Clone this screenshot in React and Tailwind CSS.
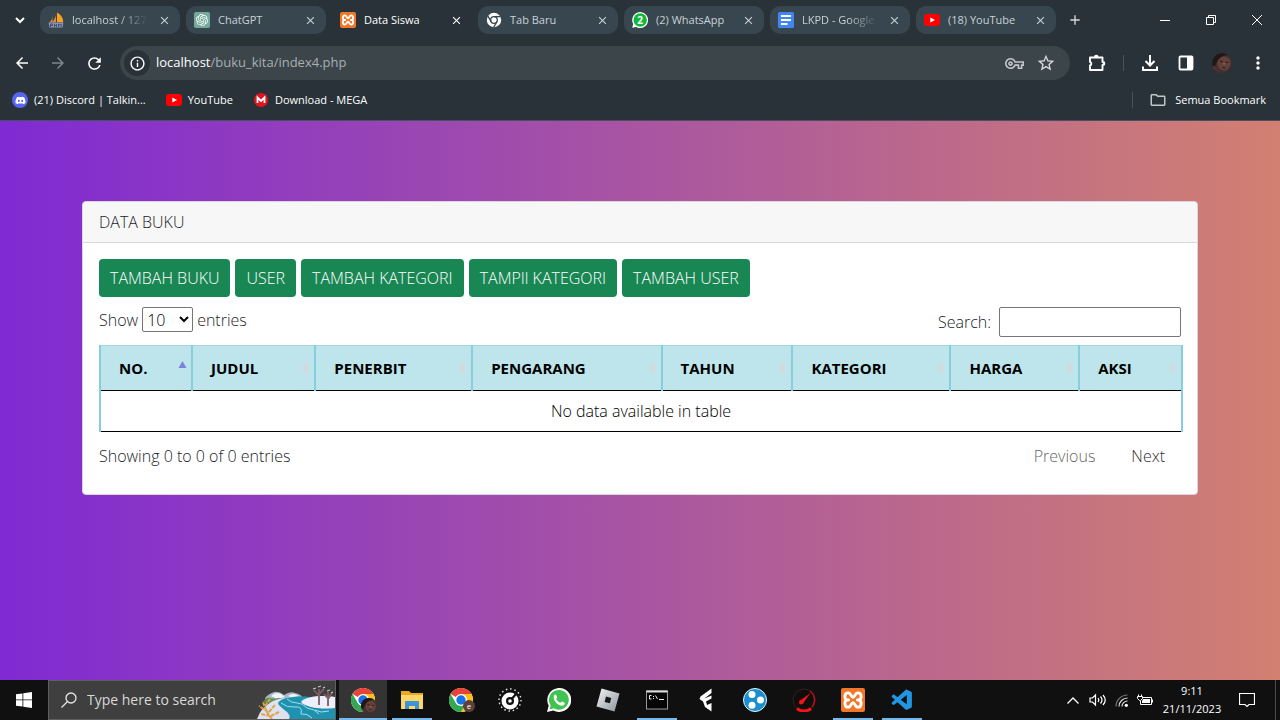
import React from "react";
import { SiOpenai } from "react-icons/si";
import { FaDiscord } from "react-icons/fa";
import { VscVscode } from "react-icons/vsc";
import {
  MdArrowBack,
  MdArrowForward,
  MdRefresh,
  MdInfoOutline,
  MdOutlineVpnKey,
  MdStarBorder,
  MdMoreVert,
  MdOutlineFolder,
  MdClose,
  MdAdd,
} from "react-icons/md";

function SailIcon() {
  return (
    <svg viewBox="0 0 16 16" className="size-4 shrink-0" aria-hidden="true">
      <path d="M8 0.500C8.500 4 6.500 8 3.500 10.500L8 10.200Z" fill="#e08e34" />
      <path d="M4.500 2C4.800 6 3.500 8.500 1.200 10.500L4.500 10.200Z" fill="#c08a50" />
      <path d="M9 0.500C13.500 3 15.500 7 15 10.300L9 10.300Z" fill="#f8a020" />
      <path d="M0.500 10.500h15l-1 5H1.500z" fill="#8d93b4" />
      <path d="M2.500 15v-3h2v1.500h-2M6.500 12v3m0-1.500h2m0-1.500v3M10.500 15v-3l1.300 1 1.300-1v3" stroke="#39405a" fill="none" strokeWidth="0.800" />
    </svg>
  );
}

function GptIcon() {
  return (
    <span className="flex size-4 shrink-0 items-center justify-center rounded-xs bg-[#74aa9c] text-white">
      <SiOpenai size={12} />
    </span>
  );
}

function XamppGlyph({ className }) {
  return (
    <svg viewBox="0 0 20 20" className={className} fill="none" stroke="currentColor" strokeWidth="2.600" strokeLinecap="round" strokeLinejoin="round" aria-hidden="true">
      <path d="M5.500 3.500C2 3.500 2 8.500 4 10C2 11.500 2 16.500 5.500 16.500C8.500 16.500 8 12.500 10 12.500S11.500 16.500 14.500 16.500C18 16.500 18 11.500 16 10C18 8.500 18 3.500 14.500 3.500C11.500 3.500 12 7.500 10 7.500S8.500 3.500 5.500 3.500z" />
      <path d="M4 10h2M14 10h2" />
    </svg>
  );
}

function XamppIcon({ large }) {
  return large ? (
    <span className="flex size-6 items-center justify-center rounded-xs bg-[#f07828] text-white">
      <XamppGlyph className="size-[22px]" />
    </span>
  ) : (
    <span className="flex size-4 shrink-0 items-center justify-center rounded-xs bg-[#f07828] text-white">
      <XamppGlyph className="size-3.5" />
    </span>
  );
}

function ChromeMonoIcon() {
  return (
    <svg viewBox="0 0 16 16" className="size-4 shrink-0" aria-hidden="true">
      <circle cx="8" cy="8" r="7.200" fill="#fff" />
      <circle cx="8" cy="8" r="3.300" fill="none" stroke="#38474f" strokeWidth="1.300" />
      <path d="M8 4.700H14.500M5.100 9.600L1.900 4.200M10.900 9.600L7.700 15.200" stroke="#38474f" strokeWidth="1.300" />
    </svg>
  );
}

function WhatsappBadgeIcon() {
  return (
    <span className="relative flex size-4 shrink-0 items-center justify-center">
      <svg viewBox="0 0 16 16" className="absolute inset-0 size-4" aria-hidden="true">
        <path d="M0.200 15.800L1.200 12A8 8 0 1 1 4.200 15Z" fill="#fff" />
        <circle cx="8.200" cy="8" r="6.700" fill="#12b83e" />
      </svg>
      <span className="relative text-[10px] leading-none font-bold text-white">2</span>
    </span>
  );
}

function DocsIcon() {
  return (
    <svg viewBox="0 0 16 16" className="size-4 shrink-0" aria-hidden="true">
      <rect width="16" height="16" rx="1.500" fill="#4285f4" />
      <path d="M3 4h10M3 8h10M3 12h6.500" stroke="#fff" strokeWidth="2" />
    </svg>
  );
}

function YoutubeIcon() {
  return (
    <svg viewBox="0 0 16 16" className="size-4 shrink-0" aria-hidden="true">
      <rect y="2" width="16" height="12" rx="3" fill="#f00" />
      <path d="M6.300 5.400L11 8l-4.700 2.600z" fill="#fff" />
    </svg>
  );
}

function MegaIcon() {
  return (
    <svg viewBox="0 0 16 16" className="size-4 shrink-0" aria-hidden="true">
      <circle cx="8" cy="8" r="7" fill="#e0151f" />
      <path d="M4.500 11V5.500L8 9l3.500-3.500V11" stroke="#fff" strokeWidth="1.800" fill="none" />
    </svg>
  );
}

function DiscordIcon() {
  return (
    <span className="flex size-4 shrink-0 items-center justify-center rounded-full bg-[#5865f2] text-white">
      <FaDiscord size={11} />
    </span>
  );
}

function Portrait({ className }) {
  return (
    <svg viewBox="0 0 20 20" className={className} aria-hidden="true">
      <defs>
        <clipPath id="face">
          <circle cx="10" cy="10" r="10" />
        </clipPath>
      </defs>
      <g clipPath="url(#face)">
        <rect width="20" height="20" fill="#45302e" />
        <ellipse cx="12" cy="10.500" rx="6.500" ry="7" fill="#64413b" />
        <path d="M0 0h20v3C14 1 9 3 6 7L3 13H0z" fill="#201818" />
        <path d="M8 8l3 1M13.500 9.500l3-.5M10 14.500l3.500.5" stroke="#2e1d1b" strokeWidth="1.200" />
        <path d="M11 10.500l2 .5" stroke="#8a6258" strokeWidth="1.500" />
        <path d="M1 13l6 7H0z" fill="#6b2f2f" />
      </g>
    </svg>
  );
}

function ChromeIcon({ badge }) {
  return (
    <span className="relative size-6">
      <svg viewBox="0 0 24 24" className="size-6" aria-hidden="true">
        <circle cx="12" cy="12" r="12" fill="#fff" />
        <path d="M12 12L1.600 6A12 12 0 0 1 22.400 6H12z" fill="#ea4335" />
        <path d="M12 6H22.400A12 12 0 0 1 12 24L17.200 15z" fill="#fbc116" />
        <path d="M1.600 6A12 12 0 0 0 12 24L17.200 15L12 17.400L6.800 15z" fill="#34a853" />
        <circle cx="12" cy="12" r="6" fill="#fff" />
        <circle cx="12" cy="12" r="4.700" fill="#1a73e8" />
      </svg>
      {badge === "photo" ? (
        <Portrait className="absolute -right-0.5 -bottom-0.5 size-4" />
      ) : (
        <span className="absolute -right-0.5 bottom-0 flex size-3 items-center justify-center rounded-full bg-[#5d4037] text-[8px] leading-none text-white">
          e
        </span>
      )}
    </span>
  );
}

function FolderIcon() {
  return (
    <svg viewBox="0 0 24 24" className="size-6" aria-hidden="true">
      <path d="M1 3h8l2 2h12v16H1z" fill="#e8a824" />
      <path d="M1 7h22v14H1z" fill="#ffd766" />
      <path d="M5 21v-7q0-1 1-1h12q1 0 1 1v7h-4v-3H9v3z" fill="#3c95d6" />
    </svg>
  );
}

function DialIcon() {
  return (
    <svg viewBox="0 0 24 24" className="size-6" aria-hidden="true">
      <circle cx="12" cy="12" r="11" fill="none" stroke="#ddd" strokeWidth="1.500" strokeDasharray="1.500 2.800" />
      <circle cx="12" cy="13" r="8.500" fill="#fff" />
      <circle cx="12" cy="13" r="4" fill="#111" />
      <path d="M12 13L18 6" stroke="#111" strokeWidth="2.200" />
      <circle cx="12" cy="13" r="1.800" fill="#fff" />
    </svg>
  );
}

function WhatsappIcon() {
  return (
    <svg viewBox="0 0 24 24" className="size-6" aria-hidden="true">
      <path d="M0 24L1.700 17.700A12 12 0 1 1 6.300 22.400Z" fill="#fff" />
      <path d="M2.600 21.400L3.700 17.400A9.900 9.900 0 1 1 6.800 20.300Z" fill="#3fc351" />
      <path d="M7 7.500c.8-1.500 2-1 2.300-.2l.8 2c.2.600-.9 1.300-.9 1.700 1 2 2.300 3 4.300 3.800.5.100 1.200-1.400 1.800-1.200l2.200 1.100c.8.400-.1 2.500-1.400 2.900-2 .6-5-.8-7-2.900S6.300 10 7 7.500z" fill="#fff" />
    </svg>
  );
}

function RobloxIcon() {
  return (
    <svg viewBox="0 0 24 24" className="size-6" aria-hidden="true">
      <defs>
        <linearGradient id="steel" x1="0" y1="0" x2="1" y2="1">
          <stop offset="0" stopColor="#f4f5f6" />
          <stop offset="1" stopColor="#8b949c" />
        </linearGradient>
      </defs>
      <path d="M5.500 0.500L23.500 5.500L18.500 23.500L0.500 18.500Z" fill="url(#steel)" />
      <path d="M10 8.500L15.300 10L13.900 15.300L8.600 13.900Z" fill="#14181c" />
    </svg>
  );
}

function TerminalIcon() {
  return (
    <svg viewBox="0 0 24 24" className="size-6" aria-hidden="true">
      <rect x="1.500" y="3" width="21" height="18" fill="#050505" stroke="#9a9a9a" />
      <path d="M1.500 3.500h21" stroke="#dcdcdc" strokeWidth="2" />
      <path d="M6.500 7.500H4.500v3.500H6.500M8.500 8v1M8.500 10v1M10.500 7.500l2 3.500M14 11.500h5" stroke="#eee" fill="none" />
    </svg>
  );
}

function FilmoraIcon() {
  return (
    <svg viewBox="0 0 24 24" className="size-6" aria-hidden="true">
      <path d="M17.500 0.500L6.500 8.500L5.500 11L9 13.500L11 19L17.500 23.500V15L13 17L12 13.500L17.500 10.500V7.500L10.500 10.500L17.500 5z" fill="#fff" />
    </svg>
  );
}

function DotsIcon() {
  return (
    <svg viewBox="0 0 24 24" className="size-6" aria-hidden="true">
      <circle cx="12" cy="12" r="11.500" fill="#188fd0" stroke="#e6f4fb" />
      <circle cx="9" cy="6.500" r="3.500" fill="#fff" />
      <circle cx="17.500" cy="12" r="3.500" fill="#fff" />
      <circle cx="9" cy="17.200" r="3.500" fill="#fff" />
    </svg>
  );
}

function GaugeIcon() {
  return (
    <svg viewBox="0 0 24 24" className="size-6" aria-hidden="true">
      <circle cx="12" cy="12" r="11" fill="#120d0d" stroke="#35201f" />
      <path d="M18 3A11 11 0 0 1 20 19" fill="none" stroke="#c01218" strokeWidth="1.500" />
      <path d="M5 20.500a11 11 0 0 0 14 0" fill="none" stroke="#f3141a" strokeWidth="3" />
      <path d="M18.500 5L7.500 13L10.500 16z" fill="#f3141a" />
      <circle cx="9.200" cy="14.300" r="2.200" fill="#f3141a" />
    </svg>
  );
}

const tabs = [
  { title: "localhost / 127", icon: <SailIcon />, fades: true },
  { title: "ChatGPT", icon: <GptIcon /> },
  { title: "Data Siswa", icon: <XamppIcon />, active: true },
  { title: "Tab Baru", icon: <ChromeMonoIcon /> },
  { title: "(2) WhatsApp", icon: <WhatsappBadgeIcon /> },
  { title: "LKPD - Google", icon: <DocsIcon />, fades: true },
  { title: "(18) YouTube", icon: <YoutubeIcon /> },
];

function Tab({ title, icon, active, fades }) {
  return (
    <div
      className={
        active
          ? "flex h-7 w-[140px] items-center gap-2 rounded-[10px] px-2 text-white"
          : "flex h-7 w-[140px] items-center gap-2 rounded-[10px] bg-[#38474f] px-2 text-[#c9d1d5]"
      }
    >
      {icon}
      <span
        className={
          fades
            ? "min-w-0 flex-1 mask-r-from-60% text-[11px] whitespace-nowrap"
            : "min-w-0 flex-1 text-[11px] whitespace-nowrap"
        }
      >
        {title}
      </span>
      <button aria-label={"Tutup " + title} className="flex size-4 items-center justify-center">
        <MdClose size={13} />
      </button>
    </div>
  );
}

function TabStrip() {
  return (
    <div className="flex h-10 items-center">
      <button aria-label="Cari tab" className="flex h-10 w-10 items-center justify-center text-white">
        <svg viewBox="0 0 10 10" className="size-2.5" fill="none" stroke="currentColor" strokeWidth="2" aria-hidden="true">
          <path d="M1 3l4 4 4-4" />
        </svg>
      </button>
      <div className="flex gap-1.5">
        {tabs.map((tab) => (
          <Tab key={tab.title} {...tab} />
        ))}
      </div>
      <button aria-label="Tab baru" className="ml-2 flex size-[22px] items-center justify-center text-[#d5dadd]">
        <MdAdd size={16} />
      </button>
      <div className="ml-auto flex text-white">
        <button aria-label="Minimalkan" className="flex h-10 w-[46px] items-center justify-center">
          <svg viewBox="0 0 10 10" className="size-2.5" stroke="currentColor" aria-hidden="true"><path d="M0 5.500h10" /></svg>
        </button>
        <button aria-label="Pulihkan" className="flex h-10 w-[46px] items-center justify-center">
          <svg viewBox="0 0 10 10" className="size-2.5" fill="none" stroke="currentColor" aria-hidden="true"><path d="M0.500 2.500h7v7h-7zM2.500 2.500v-2h7v7h-2" /></svg>
        </button>
        <button aria-label="Tutup" className="flex h-10 w-[46px] items-center justify-center">
          <svg viewBox="0 0 10 10" className="size-2.5" stroke="currentColor" aria-hidden="true"><path d="M0 0l10 10M10 0L0 10" /></svg>
        </button>
      </div>
    </div>
  );
}

function ToolButton({ label, children }) {
  return (
    <button aria-label={label} className="flex size-9 items-center justify-center">
      {children}
    </button>
  );
}

function Toolbar() {
  return (
    <div className="flex h-[46px] items-center pl-1 text-white">
      <ToolButton label="Kembali"><MdArrowBack size={18} /></ToolButton>
      <span className="text-[#7c878c]">
        <ToolButton label="Maju"><MdArrowForward size={18} /></ToolButton>
      </span>
      <ToolButton label="Muat ulang"><MdRefresh size={19} /></ToolButton>
      <div className="ml-2 flex h-[34px] flex-1 items-center rounded-full bg-[#3b454a] pr-2 pl-1">
        <span className="flex size-[26px] items-center justify-center rounded-full bg-[#283238]">
          <MdInfoOutline size={17} />
        </span>
        <a href="#url" className="ml-1.5 flex-1 text-[13px] text-[#a7b0b4]">
          <span className="text-white">localhost</span>/buku_kita/index4.php
        </a>
        <button aria-label="Sandi" className="flex size-8 items-center justify-center text-[#c0c7ca]"><MdOutlineVpnKey size={19} /></button>
        <button aria-label="Tandai halaman" className="flex size-8 items-center justify-center text-[#d5dadc]"><MdStarBorder size={20} /></button>
      </div>
      <div className="flex items-center pr-1 pl-[9px]">
        <ToolButton label="Ekstensi">
          <svg viewBox="0 0 18 18" className="size-[18px]" aria-hidden="true">
            <path d="M2 3.500h12.500v4.500a1.500 1.500 0 0 1 0 3v5H2v-4.500a1.800 1.800 0 0 0 0-3.500z" fill="none" stroke="currentColor" strokeWidth="1.900" strokeLinejoin="round" />
            <path d="M6 3a2.300 2.300 0 0 1 4.600 0zM15 7.200a2.300 2.300 0 0 1 0 4.600z" fill="currentColor" />
          </svg>
        </ToolButton>
        <span className="mx-2 h-4 w-px bg-[#46545b]" />
        <ToolButton label="Unduhan">
          <svg viewBox="0 0 18 18" className="size-[18px]" fill="none" stroke="currentColor" strokeWidth="2" aria-hidden="true">
            <path d="M9 1v10M4.500 7L9 11.500L13.500 7M2 12.500V16h14v-3.500" />
          </svg>
        </ToolButton>
        <ToolButton label="Panel samping">
          <svg viewBox="0 0 16 16" className="size-4" aria-hidden="true">
            <rect x="1.500" y="1.500" width="13" height="13" rx="1" fill="none" stroke="currentColor" strokeWidth="1.800" />
            <path d="M9 1.500h5.500v13H9z" fill="currentColor" />
          </svg>
        </ToolButton>
        <ToolButton label="Profil"><Portrait className="size-5" /></ToolButton>
        <ToolButton label="Menu"><MdMoreVert size={20} /></ToolButton>
      </div>
    </div>
  );
}

function Bookmarks() {
  return (
    <nav className="flex h-[35px] items-center gap-5 border-b border-[#4c4f63] pr-3.5 pb-1.5 pl-3 text-[11px] text-white">
      <a href="#discord" className="flex items-center gap-1.5"><DiscordIcon />(21) Discord | Talkin...</a>
      <a href="#youtube" className="flex items-center gap-1.5"><YoutubeIcon />YouTube</a>
      <a href="#mega" className="flex items-center gap-1.5"><MegaIcon />Download - MEGA</a>
      <div className="ml-auto flex items-center gap-4">
        <span className="h-4 w-px bg-[#46545b]" />
        <a href="#semua" className="flex items-center gap-2">
          <MdOutlineFolder size={18} className="text-[#c0c7ca]" />Semua Bookmark
        </a>
      </div>
    </nav>
  );
}

const actions = ["TAMBAH BUKU", "USER", "TAMBAH KATEGORI", "TAMPIl KATEGORI", "TAMBAH USER"];

const columns = [
  { name: "NO.", width: "w-[8.5%]", sorted: true },
  { name: "JUDUL", width: "w-[11.4%]" },
  { name: "PENERBIT", width: "w-[14.5%]" },
  { name: "PENGARANG", width: "w-[17.5%]" },
  { name: "TAHUN", width: "w-[12.1%]" },
  { name: "KATEGORI", width: "w-[14.6%]" },
  { name: "HARGA", width: "w-[11.9%]" },
  { name: "AKSI", width: "w-[9.5%]" },
];

function SortMark({ sorted }) {
  return (
    <svg viewBox="0 0 9 14" className="h-3.5 w-[9px] shrink-0" aria-hidden="true">
      {sorted ? (
        <path d="M0.500 7L4.500 0L8.500 7z" fill="#7b83dc" />
      ) : (
        <path d="M1 6.500L4.500 0.500L8 6.500zM1 7.500L4.500 13.500L8 7.500z" fill="#d3d8de" />
      )}
    </svg>
  );
}

function BookTable() {
  return (
    <table className="w-full table-fixed border-collapse text-base text-black">
      <thead>
        <tr className="h-[45px] border-t border-b border-t-[#a9d5dc] border-b-black bg-[#bee5eb]">
          {columns.map((c) => (
            <th key={c.name} className={c.width + " border-x-2 border-x-[#86cfda] p-0 text-left font-bold"}>
              <span className="flex items-center justify-between pr-1 pl-[18px] text-[15px]">
                {c.name}
                <SortMark sorted={c.sorted} />
              </span>
            </th>
          ))}
        </tr>
      </thead>
      <tbody>
        <tr className="h-[41px] border-b border-black">
          <td colSpan={8} className="border-x-2 border-x-[#86cfda] p-0 text-center font-light">
            No data available in table
          </td>
        </tr>
      </tbody>
    </table>
  );
}

function BookPage() {
  return (
    <main className="flex-1 bg-linear-to-r/srgb from-[#7f2ad3] to-[#d28071] pt-20">
      <div className="mx-auto max-w-[1140px] px-3">
        <section className="rounded-sm border border-[#dcd5e0] bg-white text-base font-light text-[#212529]">
          <h1 className="rounded-t-sm border-b border-[#d8d8d8] bg-[#f7f7f7] px-4 py-2">DATA BUKU</h1>
          <div className="px-4 pt-4 pb-5">
            <div className="flex flex-wrap gap-[5px]">
              {actions.map((a) => (
                <button key={a} className="h-[38px] rounded-sm bg-[#198754] px-[11px] text-white">{a}</button>
              ))}
            </div>
            <div className="mt-2.5 flex items-start justify-between">
              <label className="flex items-center gap-1">
                Show
                <select className="h-[25px] w-[51px] rounded-xs border border-[#767676] bg-white text-black" defaultValue="10">
                  <option>10</option>
                  <option>25</option>
                  <option>50</option>
                  <option>100</option>
                </select>
                entries
              </label>
              <label className="flex items-center gap-2">
                Search:
                <input type="search" className="h-[30px] w-[182px] rounded-xs border border-[#767676] bg-white px-1" />
              </label>
            </div>
            <div className="mt-2 -mr-0.5">
              <BookTable />
            </div>
            <div className="mt-1.5 flex items-center justify-between">
              <span>Showing 0 to 0 of 0 entries</span>
              <div className="flex gap-1">
                <button className="h-9 px-4 text-[#666666]" disabled>Previous</button>
                <button className="h-9 px-4 text-[#333333]">Next</button>
              </div>
            </div>
          </div>
        </section>
      </div>
    </main>
  );
}

const apps = [
  { name: "Google Chrome", icon: <ChromeIcon badge="photo" />, state: "active" },
  { name: "File Explorer", icon: <FolderIcon />, state: "open" },
  { name: "Google Chrome 2", icon: <ChromeIcon badge="letter" /> },
  { name: "Dial", icon: <DialIcon /> },
  { name: "WhatsApp", icon: <WhatsappIcon /> },
  { name: "Roblox", icon: <RobloxIcon /> },
  { name: "Command Prompt", icon: <TerminalIcon />, state: "open" },
  { name: "Filmora", icon: <FilmoraIcon /> },
  { name: "Network", icon: <DotsIcon /> },
  { name: "Gauge", icon: <GaugeIcon /> },
  { name: "XAMPP", icon: <XamppIcon large />, state: "open" },
  { name: "Visual Studio Code", icon: <VscVscode size={25} color="#2196e3" />, state: "open" },
];

function WinterArt() {
  return (
    <svg viewBox="0 0 78 38" className="h-[38px] w-[78px] shrink-0" aria-hidden="true">
      <path d="M8 17Q11 13 17 11Q22 10 27 14Q33 10 38 12Q44 13 46 17L30 21L10 22z" fill="#aab4c6" />
      <path d="M14 15Q18 10 24 13L28 16L20 18zM31 15Q36 11 42 15L36 17z" fill="#f0f3fa" />
      <path d="M7 20q2-4 6-3t8 0l6 1l-6 4H8z" fill="#5f9150" />
      <path d="M0 38Q4 26 16 20Q26 16 40 16L78 20V38z" fill="#dde1f0" />
      <path d="M32 38C36 32 22 27 21 22C24 15 46 14 61 17C44 20 46 25 60 27Q72 28 78 27V38z" fill="#1e93b0" />
      <path d="M24 22Q30 27 38 26T44 33Q50 32 55 37M30 18Q34 22 40 22T50 27Q58 28 62 33M58 29l6 2l8-1" stroke="#b6e3f0" fill="none" strokeWidth="0.900" />
      <path d="M44 21C48 15 66 14 78 16V26C64 29 48 26 44 21z" fill="#edf0fb" />
      <path d="M62 24V8M62 15L57 9M62 13L67 8M71 25V11M71 18L75 12M71 17L67 13" stroke="#7b5e62" strokeWidth="1.800" fill="none" />
      <path d="M56 8l3-1M61 6l3-1M66 7l2-1M70 10l3-1M74 12l2-1" stroke="#c5c8d4" strokeWidth="1.200" />
      <path d="M15 38Q8 30 6 20M11 31L2 25M13 35L4 33M12 31L18 24M14 35L22 31M8 25L13 18" stroke="#dba64d" strokeWidth="2" strokeDasharray="4 1" fill="none" />
    </svg>
  );
}

function Taskbar() {
  return (
    <footer className="flex h-10 items-center bg-[#101010] text-white">
      <button aria-label="Start" className="flex h-10 w-12 items-center justify-center">
        <svg viewBox="0 0 16 16" className="size-4" fill="currentColor" aria-hidden="true">
          <path d="M0 2.300L6.500 1.400V7.500H0zM7.300 1.300L16 0V7.500H7.300zM0 8.300H6.500V14.600L0 13.700zM7.300 8.300H16V16L7.300 14.700z" />
        </svg>
      </button>
      <label className="flex h-10 w-72 items-center border border-[#5f5f5f] bg-[#3f3f3f] pl-3">
        <svg viewBox="0 0 16 16" className="size-4 shrink-0" fill="none" stroke="#e6e6e6" strokeWidth="1.300" aria-hidden="true">
          <circle cx="10" cy="6" r="5" />
          <path d="M6.500 9.500L0.500 15.500" />
        </svg>
        <input placeholder="Type here to search" aria-label="Type here to search" className="ml-2.5 min-w-0 flex-1 bg-transparent text-sm outline-none placeholder:text-[#d8d8d8]" />
        <WinterArt />
      </label>
      <div className="ml-[3px] flex gap-px">
        {apps.map((app) => (
          <button
            key={app.name}
            aria-label={app.name}
            className={
              app.state === "active"
                ? "flex h-10 w-12 flex-col items-center bg-[#343434]"
                : "flex h-10 w-12 flex-col items-center"
            }
          >
            <span className="flex flex-1 items-center pt-0.5">{app.icon}</span>
            {app.state === "active" && <span className="h-0.5 w-full bg-[#76b9ed]" />}
            {app.state === "open" && <span className="h-0.5 w-10 bg-[#76b9ed]" />}
            {!app.state && <span className="h-0.5" />}
          </button>
        ))}
      </div>
      <div className="ml-auto flex h-10 items-center">
        <button aria-label="Ikon tersembunyi" className="flex h-10 w-6 items-center justify-center">
          <svg viewBox="0 0 12 7" className="w-3" fill="none" stroke="currentColor" strokeWidth="1.300" aria-hidden="true"><path d="M0.500 6.500L6 1L11.500 6.500" /></svg>
        </button>
        <button aria-label="Volume" className="flex h-10 w-6 items-center justify-center">
          <svg viewBox="0 0 17 14" className="w-[17px]" fill="none" stroke="currentColor" strokeWidth="1.200" aria-hidden="true">
            <path d="M1 5h2.500L6.500 2v10L3.500 9H1zM9 5q1.500 2 0 4M11.500 3.500q3 3.500 0 7M14 2q4.500 5 0 10" />
          </svg>
        </button>
        <button aria-label="Wi-Fi" className="flex h-10 w-6 items-center justify-center">
          <svg viewBox="0 0 13 13" className="size-[13px]" fill="none" strokeWidth="1.200" aria-hidden="true">
            <path d="M1 12.500A11.500 11.500 0 0 1 12.500 1" stroke="#777" />
            <path d="M4 12.500A8.500 8.500 0 0 1 12.500 4M7 12.500A5.500 5.500 0 0 1 12.500 7" stroke="#ddd" />
            <circle cx="11.300" cy="11.300" r="1.600" fill="#fff" />
          </svg>
        </button>
        <button aria-label="Baterai" className="flex h-10 w-6 items-center justify-center">
          <svg viewBox="0 0 16 12" className="w-4" fill="none" stroke="currentColor" aria-hidden="true">
            <path d="M5 3.500h9.500v7h-11V7M15.500 5.500v3M1.500 0.500v2M4.500 0.500v2M0.500 2.500h5v2l-2 2h-1l-2-2z" />
            <path d="M6 5h7v4H5V7z" fill="currentColor" stroke="none" />
          </svg>
        </button>
        <div className="w-[70px] text-center text-[11px] leading-[18px]">
          <div>9:11</div>
          <div>21/11/2023</div>
        </div>
        <button aria-label="Notifikasi" className="flex h-10 w-10 items-center justify-center">
          <svg viewBox="0 0 16 16" className="size-4" fill="none" stroke="currentColor" strokeWidth="1.200" aria-hidden="true"><path d="M0.500 1.500h15v11H10L8 14.500L6 12.500H0.500z" /></svg>
        </button>
        <span className="mr-1 ml-2 h-10 w-px bg-[#4a4a4a]" />
      </div>
    </footer>
  );
}

export default function App() {
  return (
    <div className="flex min-h-screen flex-col font-['Open_Sans','Noto_Sans',sans-serif]">
      <header className="bg-[#283238]">
        <TabStrip />
        <Toolbar />
        <Bookmarks />
      </header>
      <BookPage />
      <Taskbar />
    </div>
  );
}
